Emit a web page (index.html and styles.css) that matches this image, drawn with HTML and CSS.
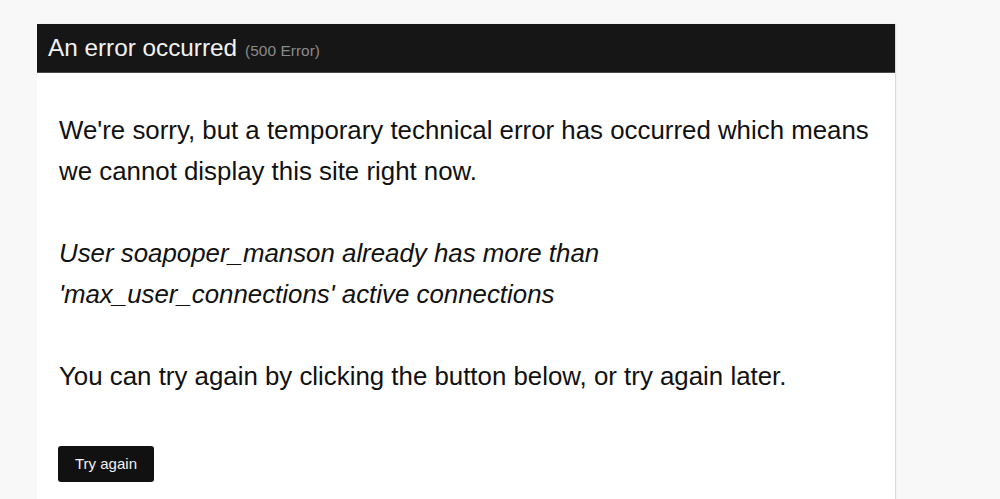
FILE: index.html
```html
<!DOCTYPE html>
<html lang="en">
<head>
<meta charset="utf-8">
<title>An error occurred</title>
<link rel="stylesheet" href="styles.css">
</head>
<body>
<div class="box">
  <div class="head">
    <span class="title">An error occurred</span>
    <span class="code">(500 Error)</span>
  </div>
  <div class="content">
    <p>We're sorry, but a temporary technical error has occurred which means we cannot display this site right now.</p>
    <p class="detail">User soapoper_manson already has more than 'max_user_connections' active connections</p>
    <p>You can try again by clicking the button below, or try again later.</p>
    <button class="btn" type="button">Try again</button>
  </div>
</div>
</body>
</html>
```
FILE: styles.css
```css
html, body {
  margin: 0;
  padding: 0;
  background: #f8f8f8;
  font-family: "Liberation Sans", Arial, sans-serif;
  color: #111;
}
.box {
  width: 858px;
  margin: 24px 0 0 37px;
  background: #fff;
  box-shadow: 1px 0 1px rgba(0,0,0,0.12);
  min-height: 475px;
}
.head {
  background: #161616;
  border-bottom: 1px solid #4a4a4a;
  height: 49px;
  box-sizing: border-box;
  padding: 0 11px;
  display: flex;
  align-items: baseline;
  gap: 8px;
  line-height: 48px;
}
.title {
  color: #f2f2f2;
  font-size: 24.3px;
}
.code {
  color: #8a8a8a;
  font-size: 15.5px;
}
.content {
  padding: 37px 10px 16px 22px;
}
.content p {
  margin: 0 0 42px;
  font-size: 25.85px;
  line-height: 40.5px;
}
.content p.detail {
  font-style: italic;
  max-width: 600px;
}
.btn {
  display: block;
  margin-top: 49px;
  background: #111;
  color: #f2f2f2;
  border: none;
  border-radius: 3px;
  width: 96px;
  height: 36px;
  font-family: "Liberation Sans", Arial, sans-serif;
  font-size: 15px;
  padding: 0;
  margin-left: -1px;
}
```
